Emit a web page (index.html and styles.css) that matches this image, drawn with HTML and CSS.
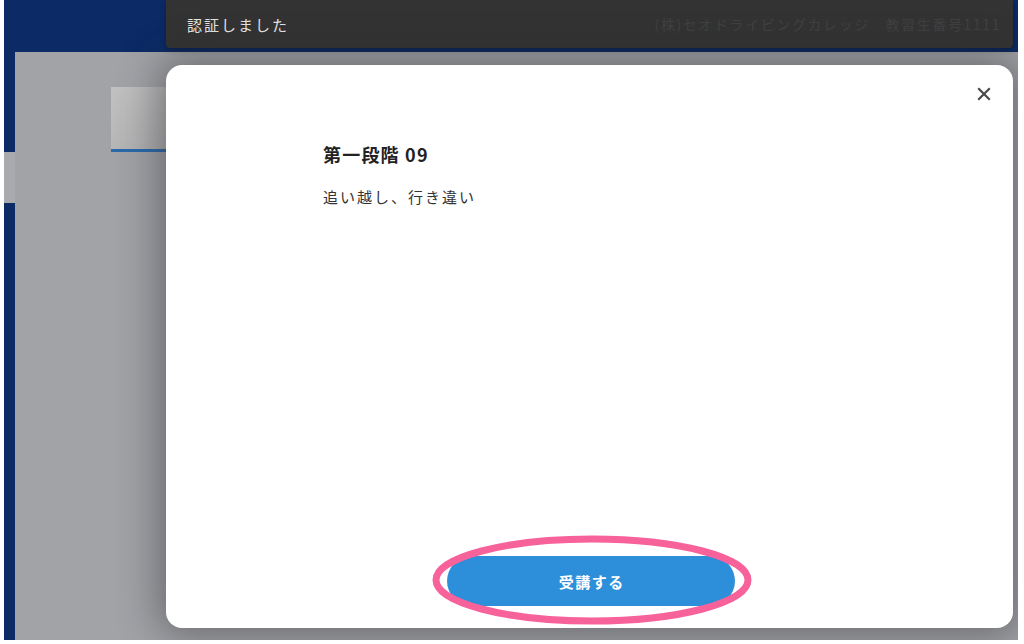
FILE: index.html
```html
<!DOCTYPE html>
<html lang="ja">
<head>
  <meta charset="UTF-8">
  <meta name="viewport" content="width=device-width, initial-scale=1.0">
  <title>受講確認</title>
  <link rel="stylesheet" href="styles.css">
</head>
<body>
  <div class="screen">
    <!-- App underneath the dialog -->
    <div class="app">
      <div class="app-header"></div>
      <div class="app-body">
        <div class="side-strip">
          <div class="strip-top"></div>
          <div class="strip-gap"></div>
          <div class="strip-bottom"></div>
        </div>
        <div class="app-main">
          <div class="tab-block"></div>
        </div>
      </div>
    </div>

    <!-- Dim layer, toast and dialog -->
    <div class="overlay">
      <div class="toast">
        <span class="toast-text">認証しました</span>
        <span class="toast-info">(株)セオドライビングカレッジ　教習生番号1111</span>
      </div>

      <div class="modal">
        <button class="close-btn" aria-label="閉じる">
          <svg width="14" height="14" viewBox="0 0 14 14">
            <path d="M2 2 L12 12 M12 2 L2 12" stroke="#4a4a4a" stroke-width="2.2" stroke-linecap="square"/>
          </svg>
        </button>
        <div class="modal-body">
          <h2 class="lesson-title">第一段階 09</h2>
          <p class="lesson-name">追い越し、行き違い</p>
        </div>
        <div class="modal-actions">
          <button class="start-btn">受講する</button>
          <svg class="highlight" width="324" height="92" viewBox="0 0 324 92">
            <ellipse cx="162" cy="46" rx="156" ry="41" fill="none" stroke="#f7629b" stroke-width="7"/>
          </svg>
        </div>
      </div>
    </div>
  </div>
</body>
</html>
```

FILE: styles.css
```css
/* Global */
body {
  margin: 0;
  padding: 0;
  background-color: #ffffff;
  font-family: "Noto Sans CJK JP", "Noto Sans", sans-serif;
}

.screen {
  position: relative;
  margin: 0 6px 4px 4px;
  height: 640px;
  overflow: hidden;
}

/* App behind the dialog */
.app {
  height: 100%;
  display: flex;
  flex-direction: column;
  background-color: #a2a3a7;
}

.app-header {
  height: 52px;
  background-color: #0b2a66;
}

.app-body {
  flex: 1;
  display: flex;
}

.side-strip {
  width: 11px;
  display: flex;
  flex-direction: column;
}

.strip-top {
  height: 100px;
  background-color: #0b2a66;
}

.strip-gap {
  height: 51px;
  background-color: #a9aaad;
}

.strip-bottom {
  flex: 1;
  background-color: #0b2a66;
}

.app-main {
  flex: 1;
  padding: 35px 0 0 96px;
}

.tab-block {
  width: 55px;
  height: 62px;
  background: linear-gradient(135deg, #c2c2c2, #adadaf);
  border-bottom: 3px solid #2a6aa9;
}

/* Overlay */
.overlay {
  position: absolute;
  inset: 0;
  display: flex;
  flex-direction: column;
  padding: 0 5px 0 162px;
  gap: 17px;
}

.toast {
  height: 48px;
  background-color: #333333;
  border-radius: 0 0 4px 4px;
  display: flex;
  align-items: center;
  justify-content: space-between;
  padding: 0 12px 0 21px;
  box-shadow: 0 2px 6px rgba(0, 0, 0, 0.3);
}

.toast-text {
  color: #e6e6e6;
  font-size: 15px;
  letter-spacing: 2px;
}

.toast-info {
  color: #414141;
  font-size: 14px;
  letter-spacing: 1.6px;
}

.modal {
  position: relative;
  height: 563px;
  background-color: #ffffff;
  border-radius: 16px;
  box-shadow: 0 0 40px 8px rgba(40, 40, 45, 0.45);
  display: flex;
  flex-direction: column;
}

.close-btn {
  position: absolute;
  top: 17px;
  right: 17px;
  width: 24px;
  height: 24px;
  padding: 0;
  border: none;
  background: transparent;
  display: flex;
  align-items: center;
  justify-content: center;
  cursor: pointer;
}

.modal-body {
  flex: 1;
  padding: 75px 0 0 157px;
}

.lesson-title {
  margin: 0;
  font-size: 18px;
  font-weight: bold;
  color: #222222;
  line-height: 28px;
  letter-spacing: 1.2px;
}

.lesson-name {
  margin: 17px 0 0;
  font-size: 15px;
  color: #333333;
  line-height: 24px;
  letter-spacing: 2px;
}

.modal-actions {
  position: relative;
  display: flex;
  justify-content: center;
  padding-bottom: 22px;
  padding-left: 3px;
}

.start-btn {
  width: 288px;
  height: 50px;
  border: none;
  border-radius: 25px;
  background-color: #2d8fd9;
  color: #ffffff;
  font-family: inherit;
  font-size: 15px;
  font-weight: bold;
  letter-spacing: 1.5px;
  text-indent: 1.5px;
  cursor: pointer;
}

.highlight {
  position: absolute;
  left: 264px;
  top: -22px;
  pointer-events: none;
}
```
